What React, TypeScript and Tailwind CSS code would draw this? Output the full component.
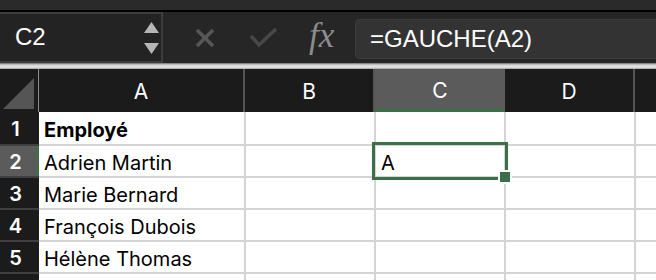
import React from "react";

function RowHeader({ n, active }: { n?: number; active?: boolean }) {
  return (
    <div
      className={`relative w-[39px] shrink-0 flex items-center justify-center border-b-2 border-[#3f3f3f] text-white text-[20px] font-semibold ${
        active ? "bg-[#5b5b5b]" : "bg-[#1b1b1b]"
      }`}
    >
      <span className="pr-[8px] pt-[2px]">{n}</span>
      {active && <div className="absolute right-0 top-0 bottom-0 w-[2px] bg-[#3a6f48]" />}
    </div>
  );
}

function Row({ n, a, c, bold, active, h }: { n?: number; a?: string; c?: string; bold?: boolean; active?: boolean; h: string }) {
  return (
    <div className={`flex ${h}`}>
      <RowHeader n={n} active={active} />
      <div className={`w-[207px] shrink-0 border-r-2 border-b-2 border-[#d4d4d4] flex items-center pl-[5px] pt-[3px] text-[20px] text-black ${bold ? "font-bold" : ""}`}>
        {a}
      </div>
      <div className="w-[130px] shrink-0 border-r-2 border-b-2 border-[#d4d4d4]" />
      <div className="w-[130px] shrink-0 border-r-2 border-b-2 border-[#d4d4d4] flex items-center pl-[5px] pt-[3px] text-[20px] text-black">
        {c}
      </div>
      <div className="w-[130px] shrink-0 border-r-2 border-b-2 border-[#d4d4d4]" />
      <div className="flex-1 border-b-2 border-[#d4d4d4]" />
    </div>
  );
}

export default function App() {
  return (
    <div className="relative w-[656px] h-[280px] overflow-hidden bg-white font-['Inter',sans-serif]">
      <div className="h-[10px] bg-[#2a2a2a]" />
      <div className="h-[2px] bg-black" />
      {/* formula bar */}
      <div className="h-[51px] flex bg-[#262626]">
        <div className="w-[163px] shrink-0 h-full border-t-2 border-b-2 border-r-2 border-[#3d3d3d] bg-[#232323] flex items-center justify-between pl-[15px] pr-[1px]">
          <span className="text-white text-[24px] font-['Liberation_Sans',sans-serif] leading-none pb-[2px]">C2</span>
          <div className="flex flex-col items-center gap-[10px] pr-[1px]">
            <svg width="15" height="11" viewBox="0 0 15 11">
              <polygon points="7.5,0 15,11 0,11" fill="#b5b5b5" />
            </svg>
            <svg width="15" height="11" viewBox="0 0 15 11">
              <polygon points="0,0 15,0 7.5,11" fill="#b5b5b5" />
            </svg>
          </div>
        </div>
        <div className="w-[192px] shrink-0 flex items-center h-full">
          <svg className="ml-[31px]" width="22" height="22" viewBox="0 0 22 22">
            <line x1="3" y1="3" x2="19" y2="19" stroke="#575757" strokeWidth="3.6" />
            <line x1="19" y1="3" x2="3" y2="19" stroke="#575757" strokeWidth="3.6" />
          </svg>
          <svg className="ml-[33px]" width="30" height="22" viewBox="0 0 30 22">
            <polyline points="2,9 10,18 27,2" fill="none" stroke="#484848" strokeWidth="3.6" />
          </svg>
          <span className="ml-[30px] text-[#8c8c8c] italic text-[35px] font-['Liberation_Serif',serif] leading-none pb-[4px]">
            fx
          </span>
        </div>
        <div className="mt-[7px] mb-[4px] flex-1 rounded-l-[5px] bg-[#333333] border border-r-0 border-[#3c3c3c] flex items-center pl-[14px]">
          <span className="text-white text-[24px] font-['Liberation_Sans',sans-serif] leading-none">=GAUCHE(A2)</span>
        </div>
      </div>
      {/* separator */}
      <div className="h-[6px] bg-[linear-gradient(to_bottom,#5c5c5c_0px,#b0b0b0_1px,#e4e4e4_3px,#d8d8d8_5px,#8a8a8a_6px)]" />
      {/* header row */}
      <div className="h-[43px] flex bg-[#1b1b1b] text-white text-[21px]">
        <div className="w-[39px] shrink-0 relative border-r border-[#8a8a8a]">
          <svg className="absolute left-[3px] top-[9px]" width="31" height="31" viewBox="0 0 31 31">
            <polygon points="31,0 31,31 0,31" fill="#555555" />
          </svg>
        </div>
        <div className="w-[206px] shrink-0 border-r-2 border-[#555] flex items-center justify-center pt-[2px]">A</div>
        <div className="w-[130px] shrink-0 border-r-2 border-[#555] flex items-center justify-center pt-[2px]">B</div>
        <div className="w-[130px] shrink-0 bg-[#5b5b5b] border-b-[3px] border-[#3a6f48] flex items-center justify-center pt-[4px]">C</div>
        <div className="w-[130px] shrink-0 border-r-2 border-[#555] flex items-center justify-center pt-[2px]">D</div>
        <div className="flex-1" />
      </div>
      <Row n={1} a="Employé" bold h="h-[34px]" />
      <Row n={2} a="Adrien Martin" c="A" active h="h-[32px]" />
      <Row n={3} a="Marie Bernard" h="h-[32px]" />
      <Row n={4} a="François Dubois" h="h-[32px]" />
      <Row n={5} a="Hélène Thomas" h="h-[32px]" />
      <Row h="h-[32px]" />
      {/* selection */}
      <div className="absolute left-[372px] top-[142px] w-[136px] h-[38px] border-[3px] border-[#3a6f48]" />
      <div className="absolute left-[498px] top-[170px] w-[14px] h-[14px] border-2 border-white bg-[#3a6f48]" />
    </div>
  );
}
